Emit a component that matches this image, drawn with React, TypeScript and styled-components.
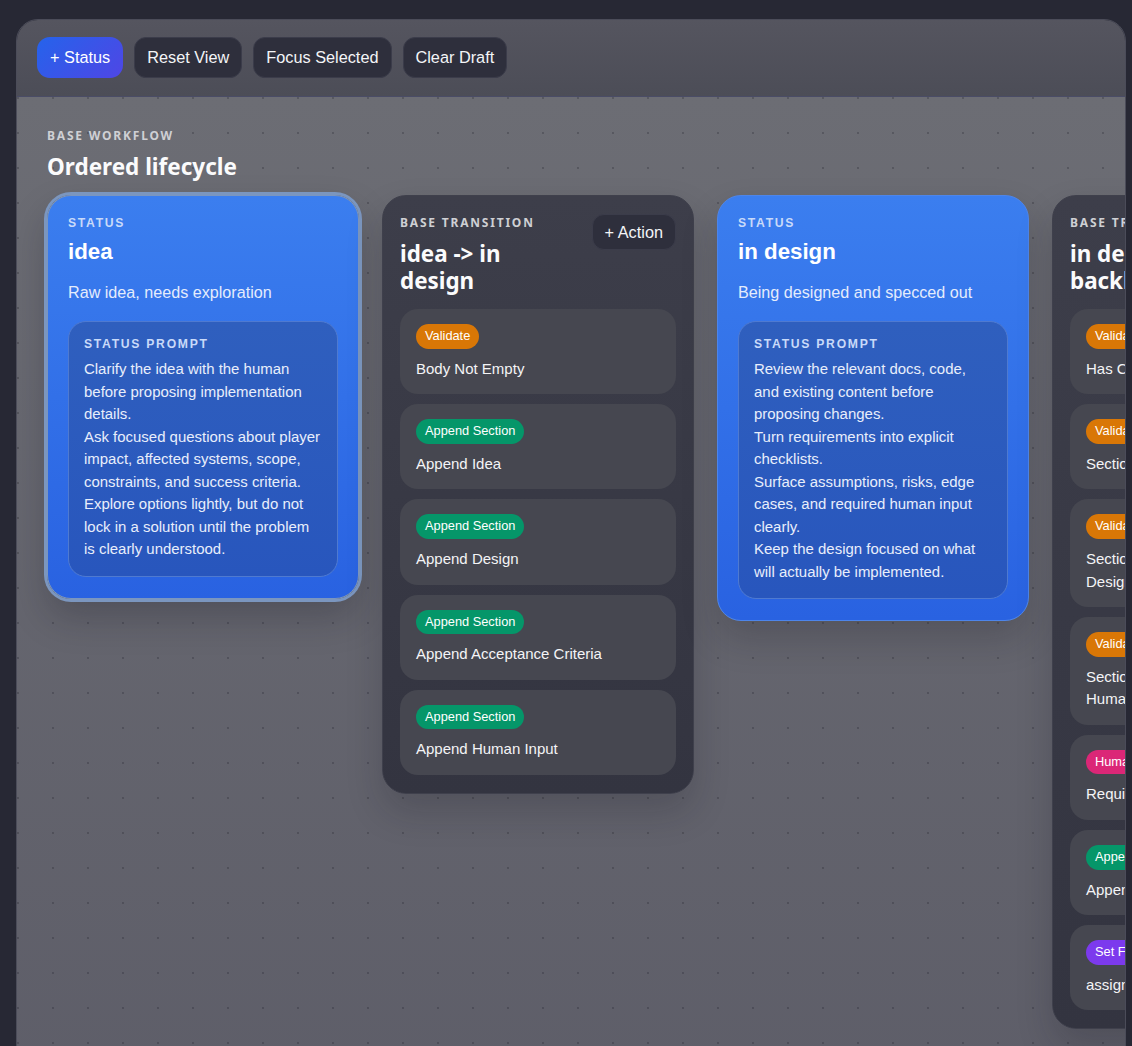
import React, { FunctionComponent } from "react";
import styled, { createGlobalStyle } from "styled-components";

const GlobalStyle = createGlobalStyle`
  html, body {
    margin: 0;
    height: 1046px;
    overflow: hidden;
    background: #272834;
    font-family: "Liberation Sans", Arial, sans-serif;
  }
`;

const Panel = styled.div`
  box-sizing: border-box;
  margin: 19px 0 0 16px;
  width: 1110px;
  height: 1100px;
  border: 1px solid #4b4c59;
  border-radius: 22px;
  overflow: hidden;
  display: flex;
  flex-direction: column;
`;

const Toolbar = styled.div`
  display: flex;
  align-items: center;
  gap: 11px;
  height: 77px;
  flex-shrink: 0;
  box-sizing: border-box;
  padding: 0 20px 2px;
  background: linear-gradient(180deg, #55555f, #4c4d57);
  border-bottom: 1px solid #4a4c66;
`;

const Button = styled.button`
  box-sizing: border-box;
  height: 41px;
  padding: 0 12px;
  border-radius: 12px;
  border: 1px solid #3b3c4a;
  background: #2e2f3c;
  color: #f4f5f7;
  font-family: inherit;
  font-size: 16.3px;
`;

const PrimaryButton = styled(Button)`
  border: none;
  padding: 0 13px;
  border-radius: 13px;
  background: linear-gradient(135deg, #2563eb, #4f46e5);
  color: #fff;
`;

const ActionButton = styled(Button)`
  height: 36px;
  flex-shrink: 0;
`;

const Canvas = styled.div`
  flex: 1;
  padding: 30px 30px 0;
  overflow: hidden;
  background-color: #64656d;
  background-image: radial-gradient(circle at 1px 1px, rgba(30, 30, 40, 0.26) 1px, transparent 1.4px),
    linear-gradient(180deg, #6c6d74, #5d5d68);
  background-size: 35px 35px, 100% 1046px;
`;

const Eyebrow = styled.div`
  font-family: "Noto Sans", sans-serif;
  font-weight: 700;
  font-size: 12px;
  line-height: 18px;
  letter-spacing: 0.15em;
  color: #cfd0d4;
`;

const BoardTitle = styled.h2`
  margin: 6px 0 13px;
  font-family: "Noto Sans", sans-serif;
  font-weight: 700;
  font-size: 22.5px;
  line-height: 31px;
  color: #fbfbfc;
`;

const Lane = styled.div`
  display: flex;
  align-items: flex-start;
  gap: 23px;
`;

const StatusCard = styled.section<{ $selected?: boolean }>`
  box-sizing: border-box;
  flex: 0 0 312px;
  padding: 19px 20px 21px;
  border-radius: 24px;
  background: linear-gradient(180deg, #3b7eef, #2962e1);
  border: 1px solid ${(p) => (p.$selected ? "#7b96bf" : "#4d85ea")};
  color: #fff;
  box-shadow: ${(p) =>
    p.$selected
      ? "0 0 0 3px #7b96bf, 0 18px 36px rgba(20, 20, 30, 0.25)"
      : "0 18px 36px rgba(20, 20, 30, 0.2)"};
`;

const StatusLabel = styled.div`
  font-weight: 700;
  font-size: 12.2px;
  line-height: 16px;
  letter-spacing: 0.14em;
  color: #c9daf9;
`;

const StatusName = styled.h3`
  margin: 6px 0 0;
  font-size: 22.3px;
  line-height: 30px;
  font-weight: 700;
`;

const StatusText = styled.p`
  margin: 13px 0 0;
  font-size: 16.15px;
  line-height: 24px;
  color: #e4ecfc;
`;

const PromptBox = styled.div`
  box-sizing: border-box;
  margin-top: 17px;
  padding: 14px 15px 15px;
  border-radius: 18px;
  background: linear-gradient(180deg, #2f5fbe, #2856bd);
  border: 1px solid #4f7ad0;
`;

const PromptTitle = styled(StatusLabel)`
  margin-bottom: 6px;
`;

const PromptLine = styled.div`
  font-size: 14.96px;
  line-height: 22.5px;
  color: #e8eefb;
`;

const TransitionCard = styled.section`
  box-sizing: border-box;
  flex: 0 0 312px;
  padding: 18px 17px;
  border-radius: 24px;
  border: 1px solid #3f404c;
  background: linear-gradient(180deg, #3d3e4a, #333440);
  box-shadow: 0 18px 36px rgba(20, 20, 30, 0.2);
`;

const TransitionHead = styled.header`
  display: flex;
  justify-content: space-between;
  align-items: flex-start;
  gap: 16px;
  margin-bottom: 15px;
`;

const TransitionInfo = styled.div`
  flex: 1;
  min-width: 0;
`;

const TransitionTitle = styled.h3`
  margin: 8px 0 0;
  font-family: "Noto Sans", sans-serif;
  font-weight: 700;
  font-size: 22.4px;
  line-height: 27px;
  color: #fbfbfc;
`;

const ActionList = styled.div`
  display: flex;
  flex-direction: column;
  gap: 10px;
`;

const ActionItem = styled.div`
  box-sizing: border-box;
  padding: 15px 15px 14px 16px;
  border-radius: 18px;
  background: #464750;
`;

const Badge = styled.span<{ $bg: string }>`
  display: inline-block;
  height: 24.7px;
  line-height: 24px;
  padding: 0 9px;
  border-radius: 999px;
  background: ${(p) => p.$bg};
  color: #fff;
  font-size: 12.8px;
  vertical-align: top;
  white-space: nowrap;
`;

const BadgeRow = styled.div`
  height: 24.7px;
  margin-bottom: 9px;
`;

const ActionName = styled.div`
  font-size: 15px;
  line-height: 22.5px;
  color: #f4f4f6;
`;

const colors: Record<string, string> = {
  Validate: "#d97706",
  "Append Section": "#059669",
  "Human Gate": "#db2777",
  "Set Field": "#7c3aed",
};

interface Action {
  kind: string;
  name: string;
}

interface StatusProps {
  name: string;
  text: string;
  prompt: string[];
  selected?: boolean;
}

const Status: FunctionComponent<StatusProps> = ({ name, text, prompt, selected }) => (
  <StatusCard $selected={selected}>
    <StatusLabel>STATUS</StatusLabel>
    <StatusName>{name}</StatusName>
    <StatusText>{text}</StatusText>
    <PromptBox>
      <PromptTitle>STATUS PROMPT</PromptTitle>
      {prompt.map((line) => (
        <PromptLine key={line}>{line}</PromptLine>
      ))}
    </PromptBox>
  </StatusCard>
);

const Transition: FunctionComponent<{ title: string; actions: Action[] }> = ({ title, actions }) => (
  <TransitionCard>
    <TransitionHead>
      <TransitionInfo>
        <Eyebrow>BASE TRANSITION</Eyebrow>
        <TransitionTitle>{title}</TransitionTitle>
      </TransitionInfo>
      <ActionButton>+ Action</ActionButton>
    </TransitionHead>
    <ActionList>
      {actions.map((a) => (
        <ActionItem key={a.name}>
          <BadgeRow>
            <Badge $bg={colors[a.kind]}>{a.kind}</Badge>
          </BadgeRow>
          <ActionName>{a.name}</ActionName>
        </ActionItem>
      ))}
    </ActionList>
  </TransitionCard>
);

const App: FunctionComponent = () => (
  <>
    <GlobalStyle />
    <Panel>
      <Toolbar>
        <PrimaryButton>+ Status</PrimaryButton>
        <Button>Reset View</Button>
        <Button>Focus Selected</Button>
        <Button>Clear Draft</Button>
      </Toolbar>
      <Canvas>
        <Eyebrow>BASE WORKFLOW</Eyebrow>
        <BoardTitle>Ordered lifecycle</BoardTitle>
        <Lane>
          <Status
            selected
            name="idea"
            text="Raw idea, needs exploration"
            prompt={[
              "Clarify the idea with the human before proposing implementation details.",
              "Ask focused questions about player impact, affected systems, scope, constraints, and success criteria.",
              "Explore options lightly, but do not lock in a solution until the problem is clearly understood.",
            ]}
          />
          <Transition
            title="idea -> in design"
            actions={[
              { kind: "Validate", name: "Body Not Empty" },
              { kind: "Append Section", name: "Append Idea" },
              { kind: "Append Section", name: "Append Design" },
              { kind: "Append Section", name: "Append Acceptance Criteria" },
              { kind: "Append Section", name: "Append Human Input" },
            ]}
          />
          <Status
            name="in design"
            text="Being designed and specced out"
            prompt={[
              "Review the relevant docs, code, and existing content before proposing changes.",
              "Turn requirements into explicit checklists.",
              "Surface assumptions, risks, edge cases, and required human input clearly.",
              "Keep the design focused on what will actually be implemented.",
            ]}
          />
          <Transition
            title="in design -> backlog"
            actions={[
              { kind: "Validate", name: "Has Checklist" },
              { kind: "Validate", name: "Section Present" },
              { kind: "Validate", name: "Section Contains Checklist Items: Design" },
              { kind: "Validate", name: "Section Contains Checklist Items: Human Input" },
              { kind: "Human Gate", name: "Require Approval" },
              { kind: "Append Section", name: "Append Plan" },
              { kind: "Set Field", name: "assignee" },
            ]}
          />
        </Lane>
      </Canvas>
    </Panel>
  </>
);

export default App;
